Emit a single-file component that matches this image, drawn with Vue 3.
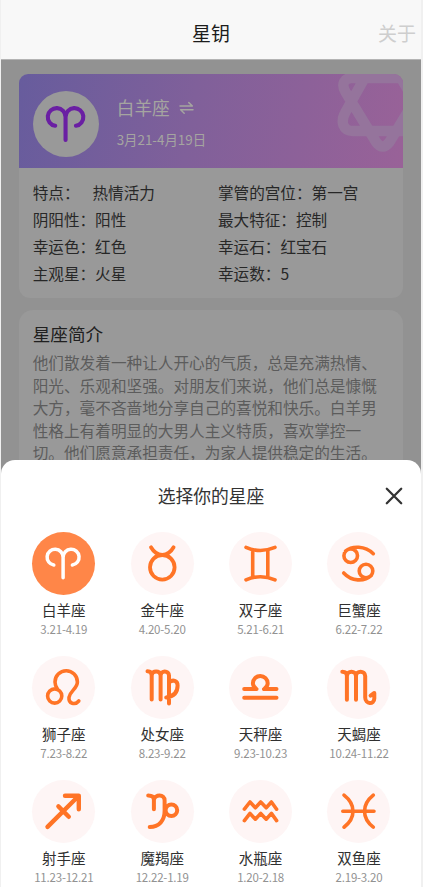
<script setup>
const facts = [
  ['特点：', '热情活力', '掌管的宫位：', '第一宫'],
  ['阴阳性：', '阳性', '最大特征：', '控制'],
  ['幸运色：', '红色', '幸运石：', '红宝石'],
  ['主观星：', '火星', '幸运数：', '5'],
]

const intro = [
  '他们散发着一种让人开心的气质，总是充满热情、',
  '阳光、乐观和坚强。对朋友们来说，他们总是慷慨',
  '大方，毫不吝啬地分享自己的喜悦和快乐。白羊男',
  '性格上有着明显的大男人主义特质，喜欢掌控一',
  '切。他们愿意承担责任，为家人提供稳定的生活。',
]

const aries =
  'M21.8 33.1A8 8 0 1 1 31.1 25.2V45.8M31.1 25.2A8 8 0 1 1 40.4 33.1'

const signs = [
  { name: '白羊座', date: '3.21-4.19', w: 3.5, d: aries },
  { name: '金牛座', date: '4.20-5.20', w: 3.8, d: 'M19 35.3a12.3 12.3 0 1 0 24.6 0a12.3 12.3 0 1 0-24.6 0M20 15.3C23 20.5 27 22.8 31.3 23C35.6 22.8 39.6 20.5 42.6 15.3' },
  { name: '双子座', date: '5.21-6.21', w: 3.6, d: 'M17 15.4Q31.3 21.6 46 15.4M17 47.8Q31.3 41.6 46 47.8M23.7 18.5V44.5M38.8 18.5V44.5' },
  { name: '巨蟹座', date: '6.22-7.22', w: 3.6, d: 'M16.9 23.7a6.8 6.8 0 1 0 13.6 0a6.8 6.8 0 1 0-13.6 0M32.2 39a6.8 6.8 0 1 0 13.6 0a6.8 6.8 0 1 0-13.6 0M18.5 19.2C25 13.5 38 13.5 46.3 21.7M16.7 41C24.5 49.5 37 50 44.4 43.4' },
  { name: '狮子座', date: '7.23-8.22', w: 3.6, d: 'M15.6 40a7.1 7.1 0 1 0 14.2 0a7.1 7.1 0 1 0-14.2 0M25.6 33.4C23.8 31 23 28.8 23 26A11.2 11.2 0 0 1 45.4 26C45.4 32.5 38.4 34.5 37 41.3C36.4 47.6 43 49.5 46.8 45' },
  { name: '处女座', date: '8.23-9.22', w: 4, d: 'M16.5 15.2C19 15.2 20.7 16.5 20.7 19.5V43.4M20.7 19.5C20.7 14 29.6 14 29.6 19.5V43.4M29.6 19.5C29.6 14 38 14 38 19.5V47.4M38 26.5C42 23 46.6 24.8 46.6 29.5C46.6 36 43 40.5 35.2 41.4' },
  { name: '天秤座', date: '9.23-10.23', w: 4, d: 'M15.2 33.1H27.6C24.8 31.4 23.9 29.3 23.9 27.3A7.4 7.4 0 0 1 38.7 27.3C38.7 29.3 37.8 31.4 35 33.1H47.5M15.2 41.8H47.5' },
  { name: '天蝎座', date: '10.24-11.22', w: 4, d: 'M15.3 15.7C18.3 15.7 19.9 17 19.9 20V43.8M19.9 20C19.9 14.3 29 14.3 29 20V43.8M29 20C29 14.3 38.2 14.3 38.2 20V41.5C38.2 48.5 47.3 48.6 47.3 42.5V37L43.6 39.6' },
  { name: '射手座', date: '11.23-12.21', w: 4.4, d: 'M15.5 46.9L46.5 16M33 15.7H46.8V29.3M26.4 26.4L36.8 36.8' },
  { name: '魔羯座', date: '12.22-1.19', w: 4, d: 'M17.2 15.6C20.8 15.6 22.9 17 22.9 20V29.3M22.9 20C24 14 33.6 14 33.6 20.5V31C33.6 40.5 28 47 18.7 47M34.6 30.3a5.8 5.8 0 1 0 11.6 0a5.8 5.8 0 1 0-11.6 0' },
  { name: '水瓶座', date: '1.20-2.18', w: 3.6, d: 'M15.4 29.2L21 22L26.4 27.8L31.7 22L37.2 27.8L42.4 22L47.6 29.2M15.4 40.6L21 33.4L26.4 39.2L31.7 33.4L37.2 39.2L42.4 33.4L47.6 40.6' },
  { name: '双鱼座', date: '2.19-3.20', w: 3.6, d: 'M17 15.2C29 24.5 29 38 17 47.2M46.3 15.2C34.6 24.5 34.6 38 46.3 47.2M15.8 31.2H47' },
]
</script>

<template>
  <div class="screen">
    <header class="bar">
      <span></span>
      <h1>星钥</h1>
      <span class="about">关于</span>
    </header>

    <main class="content">
      <section class="card profile">
        <div class="hero">
          <svg class="deco" viewBox="0 0 64 94" fill="none">
            <path d="M90 4H13C5 4 2 10 6.5 18L37 68Q43.7 77 50.5 68L81 18M29 -2L6.5 38C1 48 4 57 14 57H90M58.4 -2L82 38" />
          </svg>
          <div class="avatar">
            <svg viewBox="0 0 63 63" fill="none"><path :d="aries" /></svg>
          </div>
          <div class="who">
            <div class="name">
              白羊座
              <svg viewBox="0 0 15 14" fill="none">
                <path d="M1 5H13.4L9.8 1.6M14 8.8H1.6L5.2 12.2" />
              </svg>
            </div>
            <div class="range">3月21-4月19日</div>
          </div>
        </div>
        <div class="facts">
          <template v-for="(f, i) in facts" :key="i">
            <div :class="{ wide: i === 0 }"><span>{{ f[0] }}</span><b>{{ f[1] }}</b></div>
            <div><span>{{ f[2] }}</span><b>{{ f[3] }}</b></div>
          </template>
        </div>
      </section>

      <section class="card intro">
        <h2>星座简介</h2>
        <p><span v-for="line in intro" :key="line">{{ line }}</span></p>
      </section>
    </main>

    <section class="sheet">
      <div class="sheet-head">
        <h2>选择你的星座</h2>
        <svg class="close" viewBox="0 0 18 18" fill="none"><path d="M1.8 1.8L16.2 16.2M16.2 1.8L1.8 16.2" /></svg>
      </div>
      <div class="grid">
        <div v-for="(s, i) in signs" :key="s.name" class="sign" :class="{ active: i === 0 }">
          <div class="disc">
            <svg viewBox="0 0 63 63" fill="none"><path :d="s.d" :stroke-width="s.w" /></svg>
          </div>
          <div class="label">{{ s.name }}</div>
          <div class="date">{{ s.date }}</div>
        </div>
      </div>
    </section>
  </div>
</template>

<style>
body {
  background: #f0f0f0;
}
</style>

<style scoped>
.screen {
  position: relative;
  box-sizing: border-box;
  width: 420px;
  height: 887px;
  margin-left: 1px;
  overflow: hidden;
  background: #929292;
  font-family: 'Noto Sans CJK SC', sans-serif;
}
h1, h2, p {
  margin: 0;
  font-weight: 400;
}
svg path {
  stroke-linecap: round;
  stroke-linejoin: round;
}
.bar {
  display: grid;
  grid-template-columns: 1fr auto 1fr;
  box-sizing: border-box;
  height: 60px;
  padding: 19px 5px 0 5px;
  background: #f8f8f8;
  border-bottom: 1px solid #b4b4b4;
  line-height: 28px;
}
.bar h1 {
  font-size: 19px;
  color: #1c1c1c;
}
.about {
  justify-self: end;
  font-size: 19px;
  color: #cecece;
}
.content {
  display: flex;
  flex-direction: column;
  gap: 12px;
  padding: 14px 18px 0 18px;
}
.card {
  background: #999999;
  border-radius: 14px;
  overflow: hidden;
}
.profile {
  height: 224px;
  border-radius: 9px 9px 11px 11px;
}
.hero {
  position: relative;
  display: flex;
  align-items: center;
  box-sizing: border-box;
  height: 94px;
  padding: 6px 0 0 13.7px;
  overflow: hidden;
  background: linear-gradient(100deg, #675c9d 0%, #80609a 45%, #996298 100%);
}
.deco {
  position: absolute;
  top: 0;
  right: 0;
  width: 64px;
  height: 94px;
  overflow: visible;
}
.deco path {
  stroke: #95749c;
  stroke-width: 10.5;
}
.avatar {
  display: flex;
  align-items: center;
  justify-content: center;
  width: 66px;
  height: 66px;
  border-radius: 50%;
  background: #999999;
}
.avatar svg {
  flex: none;
  width: 70px;
  height: 70px;
}
.avatar path {
  stroke: #6a1fa3;
  stroke-width: 3.7;
}
.who {
  padding: 0 0 1px 18px;
  color: #a5a5a0;
}
.name {
  display: flex;
  align-items: center;
  gap: 9px;
  font-size: 17.7px;
  line-height: 30px;
}
.name svg {
  width: 15px;
  height: 14px;
  margin-top: 2px;
}
.name path {
  stroke: #a5a5a0;
  stroke-width: 1.5;
}
.range {
  font-size: 13.4px;
  line-height: 34px;
}
.facts {
  display: grid;
  grid-template-columns: 185.3px 1fr;
  padding: 11px 0 0 13.7px;
  font-size: 15.6px;
  line-height: 26.9px;
  color: #272727;
}
.facts b {
  font-weight: 400;
}
.wide b {
  margin-left: 13px;
}
.intro {
  height: 190px;
  padding: 10px 0 0 13.7px;
}
.intro h2 {
  font-size: 17.6px;
  line-height: 27px;
  color: #202020;
}
.intro p {
  padding-top: 5px;
  font-size: 15.65px;
  line-height: 22.5px;
  color: #5c5c5c;
}
.intro p span {
  display: block;
  white-space: nowrap;
}
.sheet {
  position: absolute;
  inset: 460px 0 0 0;
  background: #ffffff;
  border-radius: 14px 14px 0 0;
}
.sheet-head {
  display: flex;
  justify-content: center;
  height: 72px;
}
.sheet-head h2 {
  padding-top: 21px;
  font-size: 17.8px;
  line-height: 28px;
  color: #333333;
}
.close {
  position: absolute;
  top: 27px;
  right: 18px;
  width: 18px;
  height: 18px;
}
.close path {
  stroke: #333333;
  stroke-width: 2.3;
}
.grid {
  display: grid;
  grid-template-columns: repeat(4, 98.4px);
  grid-auto-rows: 124px;
  padding-left: 13.6px;
}
.sign {
  display: flex;
  flex-direction: column;
  align-items: center;
}
.disc {
  width: 63px;
  height: 63px;
  border-radius: 50%;
  background: #fef5f5;
}
.disc svg {
  display: block;
  width: 63px;
  height: 63px;
}
.disc path {
  stroke: #ff7426;
}
.active .disc {
  background: #ff8648;
}
.active .disc path {
  stroke: #ffffff;
}
.label {
  padding-top: 5px;
  font-size: 14.5px;
  line-height: 20px;
  color: #303030;
}
.date {
  font-size: 11.5px;
  line-height: 18px;
  letter-spacing: -0.2px;
  color: #929292;
}
</style>
